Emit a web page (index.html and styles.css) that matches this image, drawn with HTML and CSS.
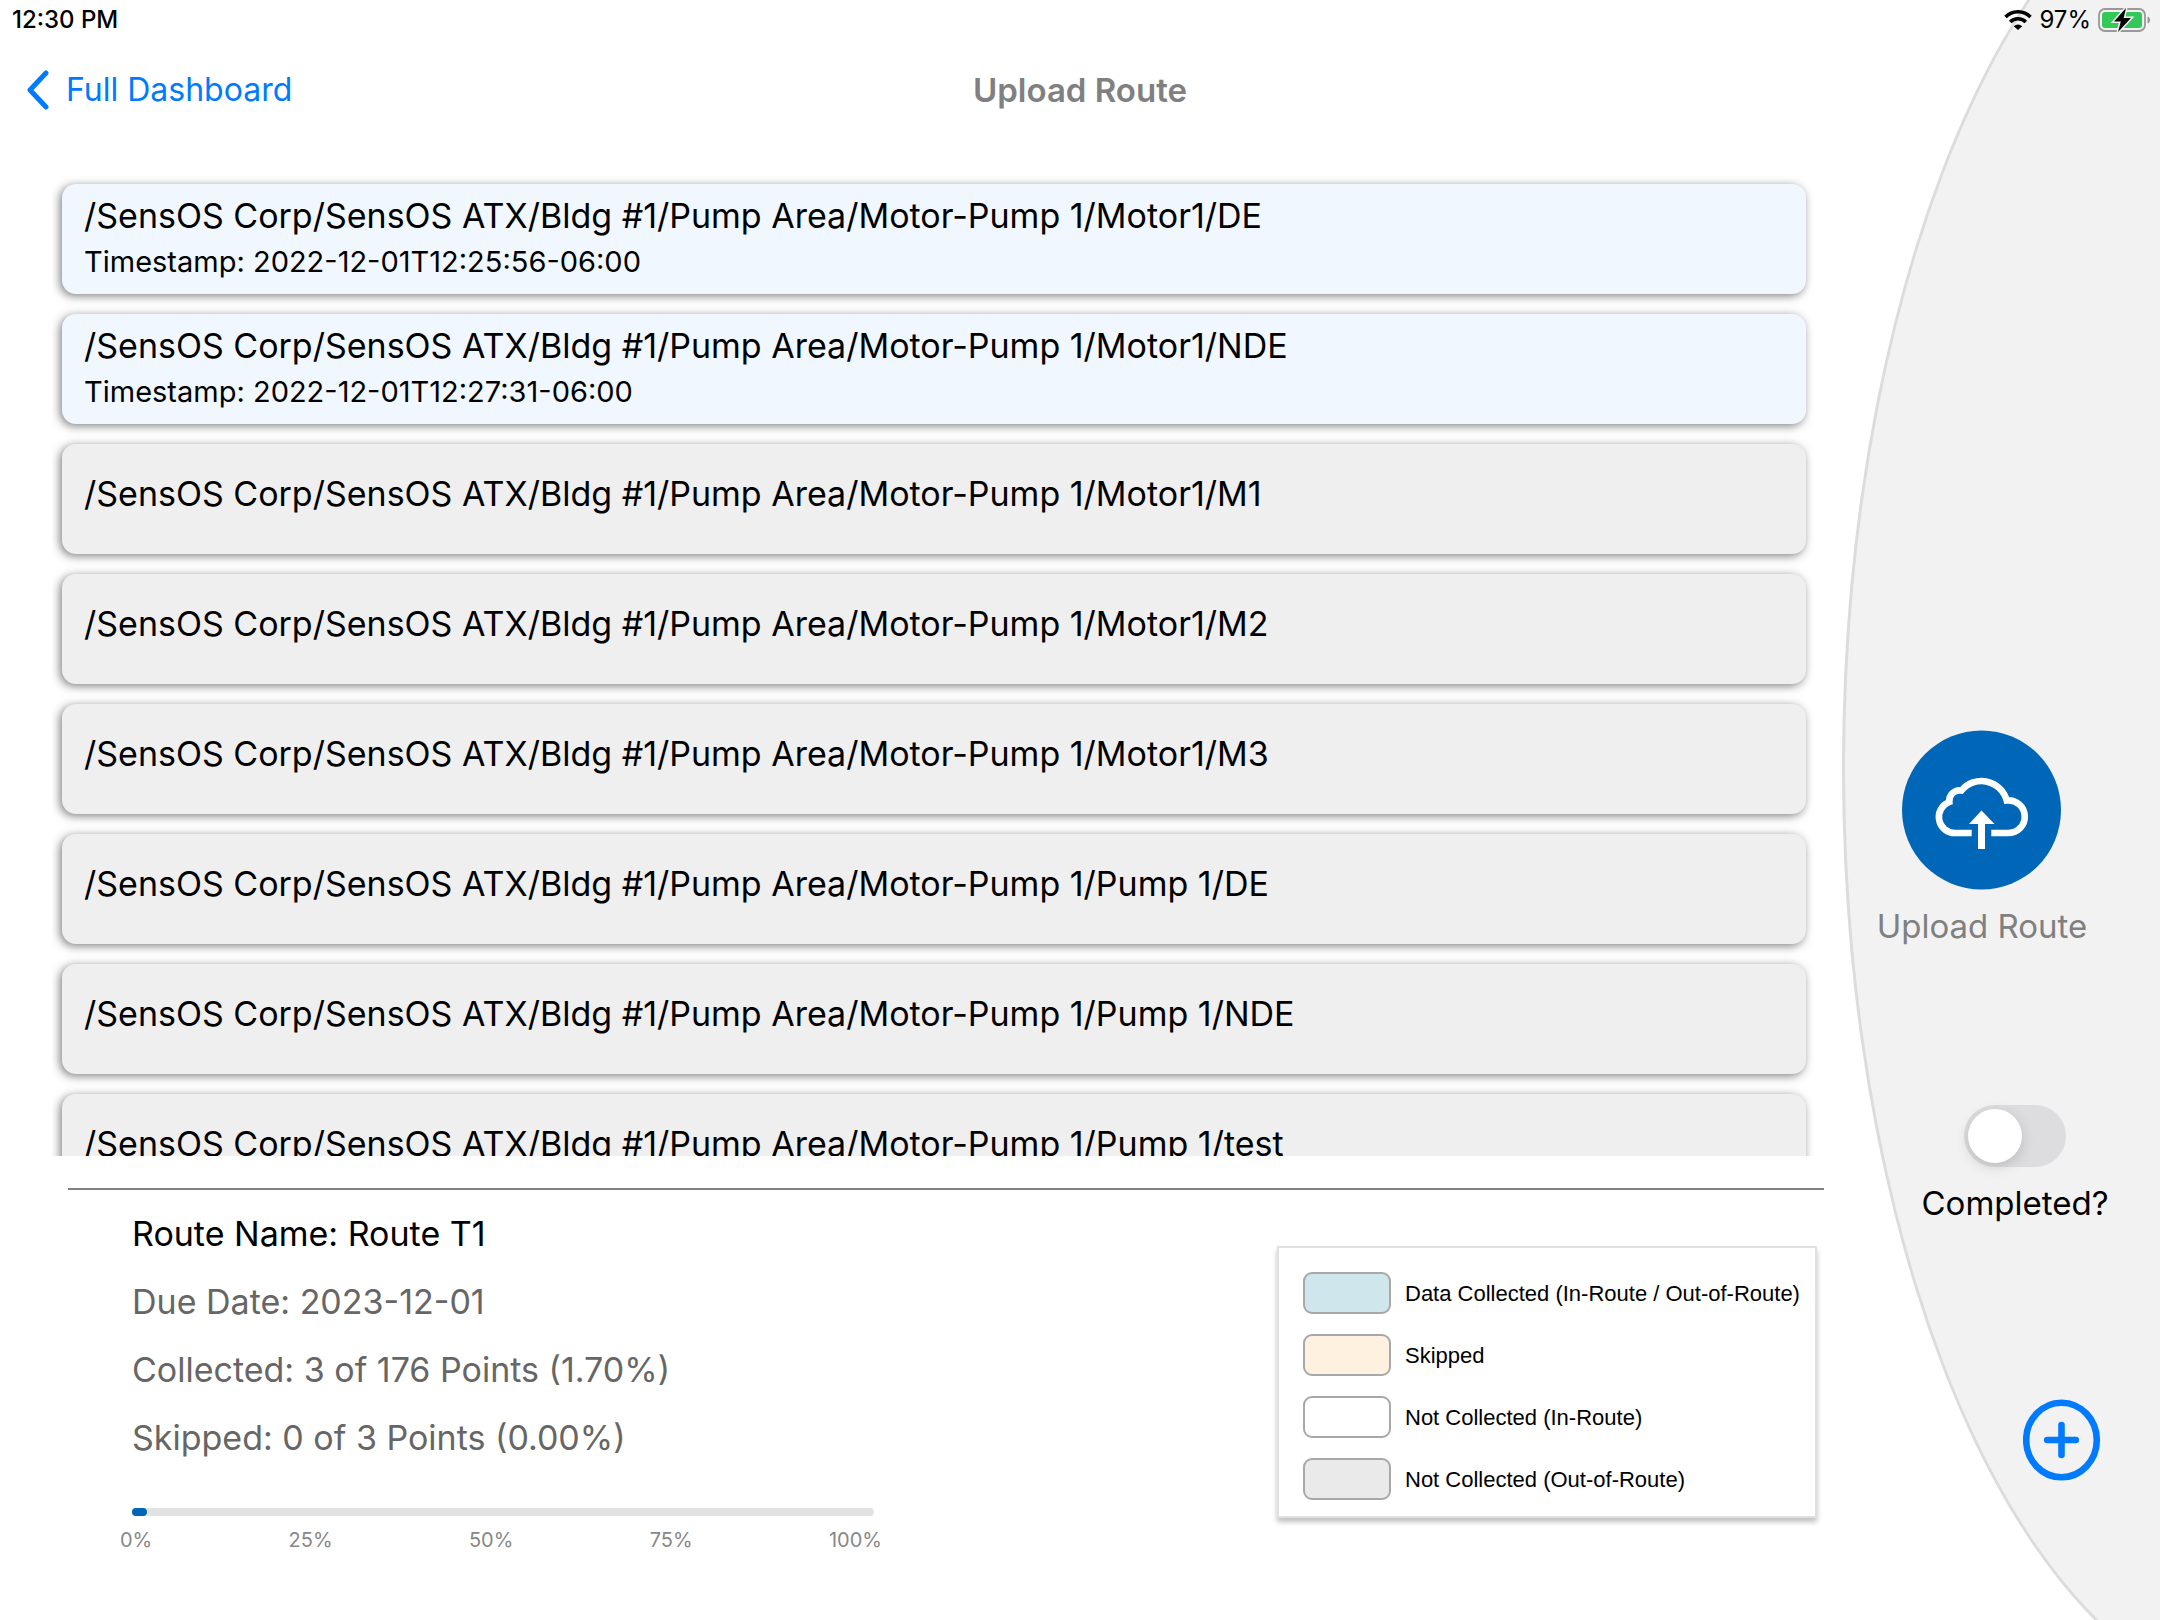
FILE: index.html
```html
<!DOCTYPE html>
<html lang="en">
<head>
<meta charset="utf-8">
<meta name="viewport" content="width=device-width, initial-scale=1">
<title>Upload Route</title>
<link rel="stylesheet" href="styles.css">
</head>
<body>
<div class="app">
  <div class="main">
    <ul class="points">
      <li class="point collected"><h2>/SensOS Corp/SensOS ATX/Bldg #1/Pump Area/Motor-Pump 1/Motor1/DE</h2><p>Timestamp: 2022-12-01T12:25:56-06:00</p></li>
      <li class="point collected"><h2>/SensOS Corp/SensOS ATX/Bldg #1/Pump Area/Motor-Pump 1/Motor1/NDE</h2><p>Timestamp: 2022-12-01T12:27:31-06:00</p></li>
      <li class="point"><h2>/SensOS Corp/SensOS ATX/Bldg #1/Pump Area/Motor-Pump 1/Motor1/M1</h2></li>
      <li class="point"><h2>/SensOS Corp/SensOS ATX/Bldg #1/Pump Area/Motor-Pump 1/Motor1/M2</h2></li>
      <li class="point"><h2>/SensOS Corp/SensOS ATX/Bldg #1/Pump Area/Motor-Pump 1/Motor1/M3</h2></li>
      <li class="point"><h2>/SensOS Corp/SensOS ATX/Bldg #1/Pump Area/Motor-Pump 1/Pump 1/DE</h2></li>
      <li class="point"><h2>/SensOS Corp/SensOS ATX/Bldg #1/Pump Area/Motor-Pump 1/Pump 1/NDE</h2></li>
      <li class="point"><h2>/SensOS Corp/SensOS ATX/Bldg #1/Pump Area/Motor-Pump 1/Pump 1/test</h2></li>
    </ul>
    <section class="summary">
      <div class="route">
        <p class="name">Route Name: Route T1</p>
        <p>Due Date: 2023-12-01</p>
        <p>Collected: 3 of 176 Points (1.70%)</p>
        <p>Skipped: 0 of 3 Points (0.00%)</p>
        <div class="track"><div class="fill" style="width: 2%"></div></div>
        <div class="ticks"><span>0%</span><span>25%</span><span>50%</span><span>75%</span><span>100%</span></div>
      </div>
      <ul class="legend">
        <li><span class="swatch blue"></span><span>Data Collected (In-Route / Out-of-Route)</span></li>
        <li><span class="swatch cream"></span><span>Skipped</span></li>
        <li><span class="swatch"></span><span>Not Collected (In-Route)</span></li>
        <li><span class="swatch grey"></span><span>Not Collected (Out-of-Route)</span></li>
      </ul>
    </section>
  </div>
  <aside class="side">
    <div class="curve"></div>
    <button class="upload" type="button">
      <svg width="160" height="160" viewBox="0 0 160 160" aria-hidden="true">
        <circle cx="79.500" cy="80" r="79.500" fill="#0067b8"/>
        <path d="M69.700 103H53A16 16 0 0 1 47.300 72A10.500 10.500 0 0 1 59.500 60.500A26 26 0 0 1 104.700 70.500A16.300 16.300 0 1 1 106 103H89.300" fill="none" stroke="#fff" stroke-width="6.600"/>
        <path d="M79.500 80.500L92.500 94H83V119H76V94H67Z" fill="#fff"/>
      </svg>
      <span>Upload Route</span>
    </button>
    <label class="completed">
      <input type="checkbox" role="switch">
      <span>Completed?</span>
    </label>
    <button class="add" type="button" aria-label="Add">
      <svg width="78" height="82" viewBox="0 0 78 82" aria-hidden="true">
        <ellipse cx="38.500" cy="41" rx="35.300" ry="37.300" fill="none" stroke="#007aff" stroke-width="6.600"/>
        <path d="M24.200 41H52.800M38.500 26V56" stroke="#007aff" stroke-width="6.600" stroke-linecap="round"/>
      </svg>
    </button>
  </aside>
  <header class="top">
    <div class="status">
      <span class="time">12:30 PM</span>
      <span class="indicators">
        <svg width="28" height="20" viewBox="0 0 28 20" aria-hidden="true">
          <path d="M1.500 7A17.500 17.500 0 0 1 26.500 7M6.200 12A11 11 0 0 1 21.800 12" fill="none" stroke="#000" stroke-width="3.500"/>
          <path d="M14 20L9.800 16.200A6 6 0 0 1 18.200 16.200Z"/>
        </svg>
        <span>97%</span>
        <svg width="54" height="26" viewBox="0 0 54 26" aria-hidden="true">
          <rect x="1" y="2" width="46" height="22" rx="6" fill="none" stroke="#999" stroke-width="1.800"/>
          <rect x="4" y="5" width="40" height="16" rx="3" fill="#34c759"/>
          <path d="M49.500 9.500C53 10.500 53 15.500 49.500 16.500Z" fill="#999"/>
          <path d="M28 1L16 14.500H22.800L20 25L33 11H25.700Z" stroke="#f2f2f2" stroke-width="3" paint-order="stroke"/>
        </svg>
      </span>
    </div>
    <nav class="nav">
      <a class="back" href="#">
        <svg width="24" height="40" viewBox="0 0 24 40" aria-hidden="true"><path d="M20 3L4 20L20 37" fill="none" stroke="#007aff" stroke-width="5" stroke-linecap="round" stroke-linejoin="round"/></svg>
        <span>Full Dashboard</span>
      </a>
      <h1>Upload Route</h1>
    </nav>
  </header>
</div>
</body>
</html>
```
FILE: styles.css
```css
* { box-sizing: border-box; }

body {
  margin: 0;
  background: #fff;
  color: #000;
  font-family: Inter, "Liberation Sans", sans-serif;
  font-size: 34px;
  line-height: 40px;
}

h1, h2, p, ul { margin: 0; padding: 0; font: inherit; }
ul { list-style: none; }
button { border: 0; padding: 0; background: none; font: inherit; cursor: pointer; }
svg { display: block; flex: none; }

.app {
  position: relative;
  display: flex;
  height: 100vh;
  overflow: hidden;
}

/* status bar and title lie over the curved panel */
.top { position: absolute; top: 0; left: 0; right: 0; pointer-events: none; }
.status {
  display: flex;
  justify-content: space-between;
  align-items: center;
  height: 40px;
  padding: 0 8px 0 12px;
  font-size: 24px;
}
.time { font-weight: 500; }
.indicators { display: flex; align-items: center; gap: 7px; }
.nav {
  display: grid;
  grid-template-columns: 1fr auto 1fr;
  align-items: center;
  height: 100px;
  padding: 0 26px;
}
.nav h1 { color: #808080; font-size: 33px; font-weight: 600; }
.back {
  display: flex;
  align-items: center;
  gap: 16px;
  color: #007aff;
  font-size: 32px;
  text-decoration: none;
  pointer-events: auto;
}

.main {
  flex: 1;
  min-width: 0;
  display: flex;
  flex-direction: column;
  padding-top: 168px;
}

.points {
  flex: 1;
  min-height: 0;
  display: flex;
  flex-direction: column;
  gap: 20px;
  margin: 0 0 32px 52px;
  padding: 16px 18px 0 10px;
  overflow: hidden;
}
.point {
  flex: none;
  display: flex;
  flex-direction: column;
  justify-content: center;
  gap: 6px;
  height: 110px;
  padding: 0 22px 10px;
  border-radius: 14px;
  background: #efefef;
  box-shadow: -2px 2px 10px rgba(0, 0, 0, 0.5);
}
.point h2 { white-space: nowrap; }
.point p { font-size: 29px; }
.point.collected { padding-bottom: 0; background: #f0f7ff; }

.summary {
  display: flex;
  justify-content: space-between;
  align-items: flex-start;
  height: 432px;
  margin: 0 0 0 68px;
  padding: 24px 7px 0 64px;
  border-top: 2px solid #808080;
}
.route { width: 742px; color: #666; }
.route p { margin-bottom: 28px; }
.route .name { color: #000; }
.track { margin-top: 50px; height: 8px; border-radius: 4px; background: #e2e2e2; }
.fill { height: 100%; border-radius: 4px; background: #0067b8; }
.ticks {
  display: flex;
  justify-content: space-between;
  margin: 4px -8px 0 -12px;
  color: #888;
  font-size: 20px;
}

.legend {
  display: flex;
  flex-direction: column;
  gap: 20px;
  width: 540px;
  margin-top: 32px;
  padding: 24px 18px 16px 24px;
  border: 2px solid #e0e0e0;
  background: #fff;
  box-shadow: 0 4px 5px rgba(0, 0, 0, 0.25);
  font-family: "Liberation Sans", Arial, sans-serif;
  font-size: 22px;
}
.legend li { display: flex; align-items: flex-start; gap: 14px; height: 42px; line-height: 44px; white-space: nowrap; }
.swatch { flex: none; width: 88px; height: 42px; border: 2px solid #a8a8a8; border-radius: 9px; }
.blue { background: #cfe6ed; }
.cream { background: #fff1df; }
.grey { background: #eaeaea; }

.side {
  position: relative;
  display: flex;
  flex-direction: column;
  align-items: center;
  width: 336px;
  padding-top: 730px;
  font-size: 33px;
}
.curve {
  position: absolute;
  top: -172px;
  left: 18px;
  width: 874px;
  height: 1880px;
  border: 3px solid #dcdcdc;
  border-radius: 50%;
  background: #f2f2f2;
}
.upload {
  position: relative;
  display: flex;
  flex-direction: column;
  align-items: center;
  gap: 16px;
  margin-right: 20px;
  color: #808080;
}
.completed {
  position: relative;
  display: flex;
  flex-direction: column;
  align-items: center;
  gap: 16px;
  margin: 159px 0 0 46px;
}
.completed input {
  appearance: none;
  width: 102px;
  height: 62px;
  margin: 0;
  padding: 4px;
  border-radius: 31px;
  background: #dddde0;
}
.completed input::before {
  content: "";
  display: block;
  width: 54px;
  height: 54px;
  border-radius: 50%;
  background: #fff;
  box-shadow: 0 4px 14px rgba(0, 0, 0, 0.15);
}
.completed input:checked { background: #34c759; }
.completed input:checked::before { margin-left: auto; }
.add { position: relative; margin: 176px 0 0 140px; }
```
